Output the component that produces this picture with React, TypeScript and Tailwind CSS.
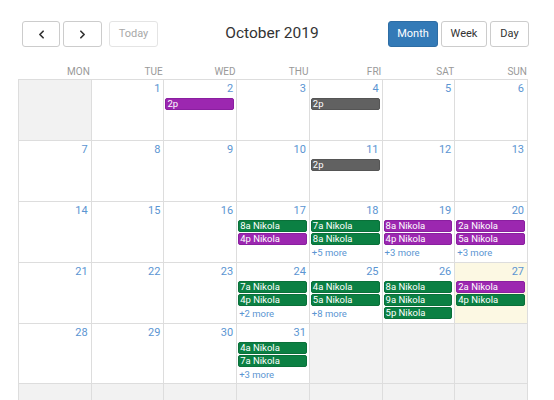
import { ChevronLeft, ChevronRight } from 'lucide-react';

type Ev = { t: string; c: 'p' | 'g' | 'k' };
type Cell = { d?: number; out?: boolean; today?: boolean; ev?: Ev[]; more?: number };

const evCls: Record<Ev['c'], string> = {
  p: 'bg-[#9c27b0] border-[#8a1fa0]',
  g: 'bg-[#0b8043] border-[#0a7039]',
  k: 'bg-[#616161] border-[#555555]',
};

const days = ['MON', 'TUE', 'WED', 'THU', 'FRI', 'SAT', 'SUN'];

const N = (t: string, c: Ev['c'] = 'g'): Ev => ({ t, c });

const cells: Cell[] = [
  { out: true },
  { d: 1 },
  { d: 2, ev: [N('2p', 'p')] },
  { d: 3 },
  { d: 4, ev: [N('2p', 'k')] },
  { d: 5 },
  { d: 6 },
  { d: 7 },
  { d: 8 },
  { d: 9 },
  { d: 10 },
  { d: 11, ev: [N('2p', 'k')] },
  { d: 12 },
  { d: 13 },
  { d: 14 },
  { d: 15 },
  { d: 16 },
  { d: 17, ev: [N('8a Nikola'), N('4p Nikola', 'p')] },
  { d: 18, ev: [N('7a Nikola'), N('8a Nikola')], more: 5 },
  { d: 19, ev: [N('8a Nikola', 'p'), N('4p Nikola', 'p')], more: 3 },
  { d: 20, ev: [N('2a Nikola', 'p'), N('5a Nikola', 'p')], more: 3 },
  { d: 21 },
  { d: 22 },
  { d: 23 },
  { d: 24, ev: [N('7a Nikola'), N('4p Nikola')], more: 2 },
  { d: 25, ev: [N('4a Nikola'), N('5a Nikola')], more: 8 },
  { d: 26, ev: [N('8a Nikola'), N('9a Nikola'), N('5p Nikola')] },
  { d: 27, today: true, ev: [N('2a Nikola', 'p'), N('4p Nikola')] },
  { d: 28 },
  { d: 29 },
  { d: 30 },
  { d: 31, ev: [N('4a Nikola'), N('7a Nikola')], more: 3 },
  { out: true },
  { out: true },
  { out: true },
  { out: true },
  { out: true },
  { out: true },
  { out: true },
  { out: true },
  { out: true },
  { out: true },
];

function DayCell({ c, i }: { c: Cell; i: number }) {
  const row = Math.floor(i / 7);
  const bg = c.out ? 'bg-[#f2f2f2]' : c.today ? 'bg-[#fcf8e3]' : 'bg-white';
  return (
    <div
      className={`${bg} border-l border-t border-[#dddddd] flex flex-col overflow-hidden ${
        row === 5 ? 'h-[61px]' : row === 4 ? 'h-[60px]' : 'h-[61px]'
      }`}
    >
      <div className="h-[18px] pt-[2px] pr-[3px] text-right text-[11px] leading-[14px] text-[#5b95d2]">
        {c.d ?? ''}
      </div>
      {c.ev?.map((e, k) => (
        <div
          key={k}
          className={`${evCls[e.c]} border mx-[1px] mr-[2px] mb-[1px] h-[12px] rounded-[2px] pl-[1px] text-[9.5px] leading-[10px] text-white whitespace-nowrap`}
        >
          {e.t}
        </div>
      ))}
      {c.more && (
        <div className="pl-[2px] text-[9.5px] leading-[14px] text-[#5b95d2]">+{c.more} more</div>
      )}
    </div>
  );
}

export default function App() {
  return (
    <div
      className="w-[554px] h-[400px] overflow-hidden bg-white pl-[18px] pt-[21px]"
      style={{ fontFamily: 'Roboto, "Liberation Sans", sans-serif' }}
    >
      <div className="w-[511px] pl-[4px] flex items-center h-[26px]">
        <div className="flex gap-[3px]">
          <button className="w-[38px] h-[26px] border border-[#cccccc] rounded-[3px] bg-white flex items-center justify-center text-[#333333]">
            <ChevronLeft size={13} strokeWidth={3.2} />
          </button>
          <button className="w-[39px] h-[26px] border border-[#cccccc] rounded-[3px] bg-white flex items-center justify-center text-[#333333]">
            <ChevronRight size={13} strokeWidth={3.2} />
          </button>
        </div>
        <button className="ml-[7px] w-[49px] h-[26px] border border-[#e4e4e4] rounded-[3px] bg-white text-[11px] text-[#a8a8a8]">
          Today
        </button>
        <div className="flex-1 text-center text-[15.5px] text-[#333333] pr-[2px]">October 2019</div>
        <div className="flex gap-[3px]">
          <button className="w-[50px] h-[26px] rounded-[3px] bg-[#337ab7] border border-[#2e6da4] text-white text-[11px]">
            Month
          </button>
          <button className="w-[46px] h-[26px] rounded-[3px] bg-white border border-[#cccccc] text-[#333333] text-[11px]">
            Week
          </button>
          <button className="w-[39px] h-[26px] rounded-[3px] bg-white border border-[#cccccc] text-[#333333] text-[11px]">
            Day
          </button>
        </div>
      </div>
      <div className="w-[510px] mt-[17px]">
        <div className="grid grid-cols-7 h-[15px]">
          {days.map((d) => (
            <div key={d} className="text-right pr-[1px] text-[10px] leading-[15px] text-[#999999]">
              {d}
            </div>
          ))}
        </div>
        <div className="grid grid-cols-7 border-r border-[#dddddd]">
          {cells.map((c, i) => (
            <DayCell key={i} c={c} i={i} />
          ))}
        </div>
      </div>
    </div>
  );
}
